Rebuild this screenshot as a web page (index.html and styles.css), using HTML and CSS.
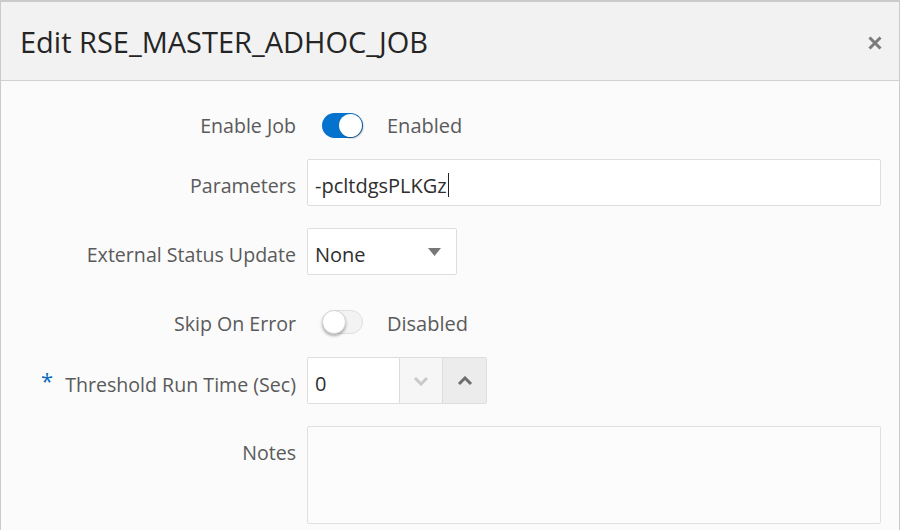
FILE: index.html
```html
<!DOCTYPE html>
<html>
<head>
<meta charset="utf-8">
<link rel="stylesheet" href="styles.css">
</head>
<body>
<div class="dialog">
  <div class="header">
    <h1 class="title">Edit RSE_MASTER_ADHOC_JOB</h1>
    <svg class="close" width="14" height="14" viewBox="0 0 14 14"><path d="M1.5 1.5 L12.5 12.5 M12.5 1.5 L1.5 12.5" stroke="#7a7a7a" stroke-width="3" fill="none"/></svg>
  </div>
  <div class="form">
    <div class="row toggle-row first">
      <div class="label">Enable Job</div>
      <div class="control">
        <span class="switch on"><span class="knob"></span></span>
        <span class="switch-text">Enabled</span>
      </div>
    </div>
    <div class="row">
      <div class="label">Parameters</div>
      <div class="control">
        <div class="input wide"><span class="value">-pcltdgsPLKGz</span><span class="caret"></span></div>
      </div>
    </div>
    <div class="row">
      <div class="label">External Status Update</div>
      <div class="control">
        <div class="input select"><span class="value">None</span>
          <svg class="tri" width="13" height="8" viewBox="0 0 13 8"><path d="M0 0 H13 L6.5 8 Z" fill="#777"/></svg>
        </div>
      </div>
    </div>
    <div class="row toggle-row second">
      <div class="label">Skip On Error</div>
      <div class="control">
        <span class="switch off"><span class="knob"></span></span>
        <span class="switch-text">Disabled</span>
      </div>
    </div>
    <div class="row">
      <div class="label"><span class="req">*</span>Threshold Run Time (Sec)</div>
      <div class="control">
        <div class="input number">
          <span class="value num">0</span>
          <span class="step down"><svg width="16" height="10" viewBox="0 0 16 10"><path d="M2 2 L8 8 L14 2" stroke="#c9c9c9" stroke-width="3" fill="none"/></svg></span>
          <span class="step up"><svg width="16" height="10" viewBox="0 0 16 10"><path d="M2 8 L8 2 L14 8" stroke="#6e6e6e" stroke-width="3" fill="none"/></svg></span>
        </div>
      </div>
    </div>
    <div class="row notes-row">
      <div class="label notes-label">Notes</div>
      <div class="control top">
        <div class="input textarea wide"></div>
      </div>
    </div>
  </div>
</div>
</body>
</html>
```

FILE: styles.css
```css
* { box-sizing: border-box; }
html, body { margin: 0; padding: 0; }
body {
  width: 900px;
  height: 530px;
  overflow: hidden;
  font-family: "Open Sans", "Noto Sans", sans-serif;
  background: #fff;
}
.dialog {
  width: 900px;
  height: 532px;
  border: 1px solid #cbcbcb;
  border-top: 2px solid #cbcbcb;
  background: #fbfbfb;
}
.header {
  height: 79px;
  background: #f2f2f2;
  border-bottom: 1px solid #d0d0d0;
  display: flex;
  align-items: center;
  justify-content: space-between;
  padding: 0 17px 0 19px;
}
.title {
  margin: 0;
  font-size: 29px;
  font-weight: 400;
  color: #252525;
}
.close { display: block; margin-top: 4px; }
.form {
  padding: 31px 18px 0 0;
  display: flex;
  flex-direction: column;
  gap: 22px;
}
.row {
  display: grid;
  grid-template-columns: 295px 1fr;
  column-gap: 11px;
  align-items: center;
}
.label {
  text-align: right;
  font-size: 19.6px;
  color: #5a5a5a;
  line-height: 1;
  padding-top: 6px;
}
.req {
  color: #0a6cbf;
  font-size: 22px;
  margin-right: 12px;
  position: relative;
  top: -3px;
}
.control { display: flex; align-items: center; }
.control.top { align-items: flex-start; }
.toggle-row.first { height: 25px; }
.toggle-row.first .label { padding-top: 0; }
.toggle-row.second { height: 38px; padding-top: 10px; }
.toggle-row.second .label { padding-top: 3px; }
.switch {
  position: relative;
  display: inline-block;
  width: 41px;
  height: 25px;
  border-radius: 13px;
  margin-left: 15px;
}
.switch.on { background: #0572ce; }
.switch.off { background: #f3f3f3; border: 1px solid #e0e0e0; height: 24px; }
.knob {
  position: absolute;
  top: 1px;
  width: 23px;
  height: 23px;
  border-radius: 50%;
  background: #fff;
}
.switch.on .knob { right: 1px; box-shadow: 1px 1px 2px rgba(0,0,0,0.35); }
.switch.off .knob { left: -1px; top: -1px; width: 24px; height: 24px; border: 1px solid #d5d5d5; box-shadow: 0 2px 3px rgba(0,0,0,0.3); }
.switch-text {
  margin-left: 24px;
  font-size: 20px;
  color: #5a5a5a;
}
.second .switch-text { padding-top: 3px; }
.input {
  height: 47px;
  border: 1px solid #dedede;
  border-radius: 2px;
  background: #fff;
  display: flex;
  align-items: center;
  font-size: 20px;
  color: #2e2e2e;
}
.wide { width: 100%; }
.value { padding-left: 7px; padding-top: 6px; line-height: 1; }
.caret {
  display: inline-block;
  width: 1px;
  height: 24px;
  background: #222;
  margin-left: 1px;
  margin-top: 4px;
}
.select { width: 150px; justify-content: space-between; padding-right: 15px; }
.number { width: 180px; padding: 0; }
.number .num { flex: 1; }
.step {
  width: 43px;
  height: 100%;
  display: flex;
  align-items: center;
  justify-content: center;
  border-left: 1px solid #dcdcdc;
}
.step.down { background: #f6f6f6; }
.step.up { background: #ececec; width: 44px; }
.notes-row { align-items: start; }
.notes-label { padding-top: 17px; }
.textarea { height: 98px; background: #fcfcfc; border-color: #e0e0e0; }
```
